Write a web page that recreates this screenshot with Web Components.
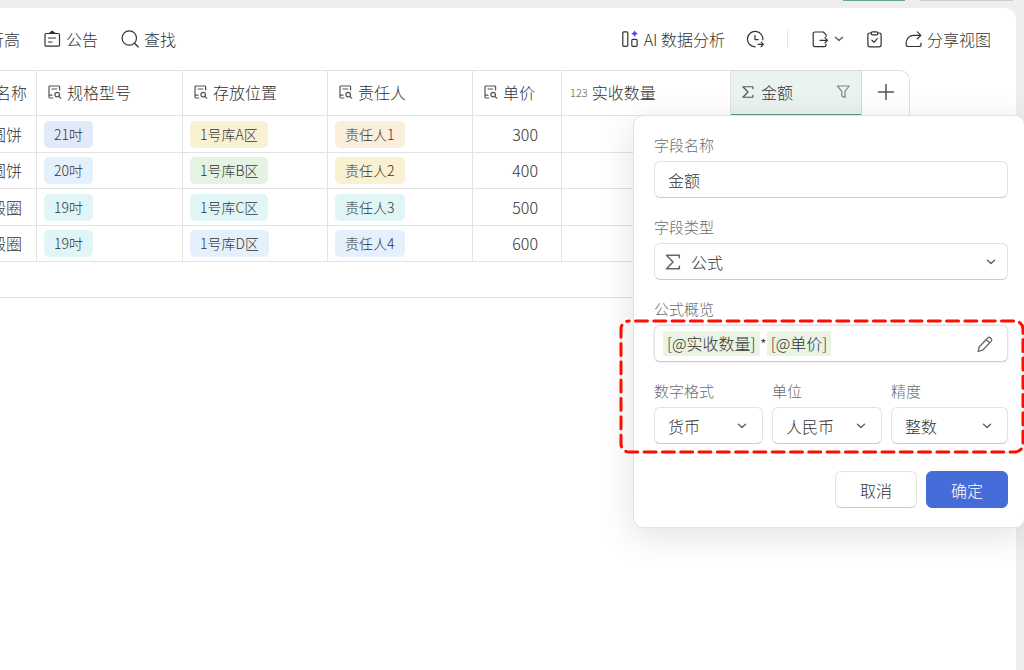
<!DOCTYPE html>
<html lang="zh-CN">
<head>
<meta charset="utf-8">
<title>库存表</title>
<style>
html, body { height: 100%; }
body {
  margin: 0; overflow: hidden; background: #eeeeee;
  font-family: "Noto Sans CJK SC", sans-serif; font-size: 16px; font-weight: 300; color: #333333;
}
</style>
</head>
<body>
<sheet-app></sheet-app>
<script>
const ICONS = {
  notice: ['0 0 18 18', '<path d="M6 3.5H3.3Q2 3.5 2 4.8V14.9Q2 16.2 3.3 16.2H15.2Q16.5 16.2 16.5 14.9V4.8Q16.5 3.5 15.2 3.5H12.5M6 3.5H12.5M6.2 3.5L9.2 1.2L12.3 3.5M5.5 8H12.5M5.5 12H9"/>'],
  search: ['0 0 18 18', '<circle cx="8.3" cy="8" r="7.2"/><path d="M13.4 13L17.2 17"/>'],
  ai: ['0 0 18 18', '<rect x="1.8" y="1.8" width="5" height="14.5" rx="1"/><rect x="10.8" y="9.3" width="5.3" height="7" rx="1"/><path fill="#6a3df0" stroke="none" d="M13.6 .4L14.9 2.5L17 3.6L14.9 4.7L13.6 7L12.3 4.7L10.2 3.6L12.3 2.5Z"/>'],
  history: ['0 0 18 18', '<path d="M9.2 16.8A7.7 7.7 0 1 1 16.8 9.8M9 5.4V9.6H12.2M12 14.3H17.4M15.2 12.1L17.4 14.3L15.2 16.5"/>'],
  export: ['0 0 18 18', '<path d="M15 6.5V4.7L12.3 2H3.9Q2.2 2 2.2 3.7V15Q2.2 16.7 3.9 16.7H13.3Q15 16.7 15 15.1V14.1M9 10.3H16.5M13.9 7.7L16.5 10.3L13.9 12.9"/>'],
  down: ['0 0 10 10', '<path stroke-width="1.5" d="M1.5 3.2L5 6.5L8.5 3.2"/>'],
  task: ['0 0 18 18', '<path d="M6.3 3H4.9Q2.9 3 2.9 5V14.8Q2.9 16.8 4.9 16.8H14.1Q16.1 16.8 16.1 14.8V5Q16.1 3 14.1 3H12.7"/><rect x="6.3" y="1.8" width="6.4" height="3" rx="1"/><path d="M6.9 10.2L9.1 12.3L12.3 8.7"/>'],
  share: ['0 0 18 18', '<path d="M2.2 11.5V14.5Q2.2 16.5 4.2 16.5H15Q17 16.5 17 14.5V13M2.6 10.6Q4.4 5.4 10.1 5.4H16.6M13.3 1.9L16.9 5.4L13.3 8.8"/>'],
  lookup: ['0 0 16 16', '<path d="M12.6 6V3.1Q12.6 2 11.5 2H3.1Q2 2 2 3.1V12.9Q2 14 3.1 14H5.8M5 5H9.8M2 11.2H5"/><circle cx="10.2" cy="10.6" r="2.3"/><path d="M11.9 12.4L13.8 14.2"/>'],
  sum: ['0 0 16 16', '<path stroke-width="1.4" d="M13.6 4.2V2H2.2L8 8L2.2 14H13.6V11.8"/>'],
  filter: ['0 0 16 16', '<path stroke-width="1.2" d="M2.4 2H14.2L10 7.4V13.4L6.8 12V7.4Z"/>'],
  plus: ['0 0 18 18', '<path stroke-width="1.5" d="M9 1.5V16.5M1.5 9H16.5"/>'],
  pencil: ['0 0 18 18', '<path stroke-width="1.5" d="M1.3 17.2L2.4 12.3L12.3 2Q13.6 .9 14.9 2L16.1 3.2Q17.2 4.5 16.1 5.8L6.3 16ZM10.4 4L14.1 7.7"/>']
};

const define = (name, html, ready) => {
  const template = document.createElement('template');
  template.innerHTML = html;
  customElements.define(name, class extends HTMLElement {
    constructor() {
      super();
      this.attachShadow({ mode: 'open' }).append(template.content.cloneNode(true));
    }
    connectedCallback() { if (ready) ready(this, this.shadowRoot); }
  });
};

define('ui-icon', `
<style>
:host { display: block; flex: none; width: var(--size, 18px); height: var(--size, 18px); }
svg { display: block; width: 100%; height: 100%; overflow: visible; fill: none; stroke: currentColor; stroke-width: 1.2; stroke-linecap: round; stroke-linejoin: round; }
</style>
<svg aria-hidden="true"></svg>`, (el, root) => {
  const [box, body] = ICONS[el.getAttribute('name')];
  const svg = root.querySelector('svg');
  svg.setAttribute('viewBox', box);
  svg.innerHTML = body;
});

define('tool-button', `
<style>
:host { display: block; flex: none; }
button { display: flex; align-items: center; gap: 5px; margin: 0; padding: 0; border: 0; background: none; font: inherit; line-height: 24px; color: inherit; white-space: nowrap; }
</style>
<button type="button"><slot></slot></button>`, (el, root) => {
  const name = el.getAttribute('label');
  if (name) root.querySelector('button').setAttribute('aria-label', name);
});

define('tool-bar', `
<style>
:host { display: flex; align-items: center; justify-content: space-between; height: 62px; padding-right: 25px; }
div { display: flex; align-items: center; }
.left { gap: 23px; margin-left: -12px; }
.right { gap: 21px; }
.down { --size: 10px; color: #666; }
hr { width: 1px; height: 18px; margin: 0 2px; border: 0; background: #e6e6e6; }
</style>
<div class="left">
  <tool-button>行高</tool-button>
  <tool-button><ui-icon name="notice"></ui-icon>公告</tool-button>
  <tool-button><ui-icon name="search"></ui-icon>查找</tool-button>
</div>
<div class="right">
  <tool-button><ui-icon name="ai"></ui-icon>AI 数据分析</tool-button>
  <tool-button label="历史记录"><ui-icon name="history"></ui-icon></tool-button>
  <hr>
  <tool-button label="导出"><ui-icon name="export"></ui-icon><ui-icon class="down" name="down"></ui-icon></tool-button>
  <tool-button label="任务"><ui-icon name="task"></ui-icon></tool-button>
  <tool-button><ui-icon name="share"></ui-icon>分享视图</tool-button>
</div>`);

define('tag-chip', `
<style>
:host { display: inline-block; vertical-align: middle; padding: 0 10px; border-radius: 5px; font-size: 14px; line-height: 27px; background: var(--tag); white-space: nowrap; }
</style>
<slot></slot>`);

define('data-grid', `
<style>
:host { display: block; overflow: hidden; --line: #e2e2e2; }
table { table-layout: fixed; width: 910px; height: 192px; border-collapse: separate; border-spacing: 0; }
th, td { box-sizing: border-box; padding: 0 7px; border: 0 solid var(--line); border-width: 0 1px 1px 0; overflow: hidden; text-align: left; font-weight: inherit; white-space: nowrap; }
th { height: 46px; border-top-width: 1px; padding: 0 10px 2px; }
th:first-child div, td:first-child div { display: flex; justify-content: flex-end; }
th:first-child { padding: 0 9px 2px 0; }
td:first-child { padding: 0 14px 0 0; }
th > div { display: flex; align-items: center; gap: 4px; line-height: 24px; }
th ui-icon { --size: 16px; color: #555; }
th.count { padding-left: 8px; }
th small { font-size: 11px; color: #555; }
td.num { text-align: right; padding-right: 23px; }
.active { background: #eaf3f0; border-color: #cfdeda; box-shadow: inset 0 -1px #5a9c87; }
.active ui-icon:first-child { --size: 14px; margin-right: 2px; }
.active ui-icon:last-child { margin-left: auto; color: #7c8a86; }
.add { border-top-right-radius: 10px; padding: 0 15px 2px; }
.add ui-icon { --size: 18px; }
.add button { display: block; padding: 0; border: 0; background: none; }
.off { border: 0; }
.new-row { height: 35px; border-bottom: 1px solid var(--line); }
</style>
<table>
  <colgroup>
    <col style="width:37px"><col style="width:146px"><col style="width:145px"><col style="width:145px">
    <col style="width:89px"><col style="width:169px"><col style="width:131px"><col style="width:48px">
  </colgroup>
  <thead><tr>
    <th><div>名称</div></th>
    <th><div><ui-icon name="lookup"></ui-icon>规格型号</div></th>
    <th><div><ui-icon name="lookup"></ui-icon>存放位置</div></th>
    <th><div><ui-icon name="lookup"></ui-icon>责任人</div></th>
    <th><div><ui-icon name="lookup"></ui-icon>单价</div></th>
    <th class="count"><div><small>123</small>实收数量</div></th>
    <th class="active"><div><ui-icon name="sum"></ui-icon>金额<ui-icon name="filter"></ui-icon></div></th>
    <th class="add"><button type="button" aria-label="添加字段"><ui-icon name="plus"></ui-icon></button></th>
  </tr></thead>
  <tbody></tbody>
</table>
<div class="new-row"></div>`, (el, root) => {
  const blue = '#e4f0fb', teal = '#e0f5f6', yellow = '#f9f1d2';
  const rows = [
    ['圆饼', '21吋', '#e2e9f8', '1号库A区', yellow, '责任人1', '#fbeedb', 300],
    ['圆饼', '20吋', blue, '1号库B区', '#e5f3e2', '责任人2', yellow, 400],
    ['毂圈', '19吋', teal, '1号库C区', teal, '责任人3', teal, 500],
    ['毂圈', '19吋', teal, '1号库D区', blue, '责任人4', blue, 600]
  ];
  const chip = (text, tone) => `<td><tag-chip style="--tag:${tone}">${text}</tag-chip></td>`;
  root.querySelector('tbody').innerHTML = rows.map(r =>
    `<tr><td><div>${r[0]}</div></td>${chip(r[1], r[2])}${chip(r[3], r[4])}${chip(r[5], r[6])}<td class="num">${r[7]}</td><td></td><td></td><td class="off"></td></tr>`
  ).join('');
});

const FIELD = `
:host { display: block; min-width: 0; }
label, .label { display: block; margin-bottom: 5px; font-size: 15px; line-height: 22px; color: #6c6c6c; }
.box { position: relative; display: flex; align-items: center; }
input, select, .formula { box-sizing: border-box; width: 100%; height: 37px; margin: 0; padding: 0 13px; border: 1px solid #e2e2e2; border-bottom-color: #cccccc; border-radius: 6px; background: #fff; font: inherit; color: inherit; outline: 0; appearance: none; }
`;

define('text-field', `<style>${FIELD}</style>
<label for="control"></label><div class="box"><input id="control" type="text"></div>`, (el, root) => {
  root.querySelector('label').textContent = el.getAttribute('label');
  root.querySelector('input').value = el.getAttribute('value');
});

define('select-field', `<style>${FIELD}
.box > ui-icon { position: absolute; pointer-events: none; color: #666; }
.down { --size: 10px; right: var(--arrow, 16px); }
.lead { --size: 18px; left: 10px; }
:host([icon]) select { padding-left: 36px; }
</style>
<label for="control"></label><div class="box"><select id="control"></select><ui-icon class="down" name="down"></ui-icon></div>`, (el, root) => {
  root.querySelector('label').textContent = el.getAttribute('label');
  root.querySelector('select').add(new Option(el.getAttribute('value')));
  if (el.hasAttribute('icon')) {
    const icon = document.createElement('ui-icon');
    icon.className = 'lead';
    icon.setAttribute('name', el.getAttribute('icon'));
    root.querySelector('.box').append(icon);
  }
});

define('formula-field', `<style>${FIELD}
.formula { display: flex; align-items: center; padding: 0 14px 0 8px; box-shadow: 0 0 2px #0000002e; }
.formula ::slotted(mark) { padding: 0 4px; background: #eaf4e3; color: inherit; line-height: 25px; }
button { margin: 0 0 0 auto; padding: 0; border: 0; background: none; color: #666; }
button ui-icon { --size: 16px; }
</style>
<div class="label" id="name">公式概览</div>
<div class="formula" role="group" aria-labelledby="name"><slot></slot><button type="button" aria-label="编辑公式"><ui-icon name="pencil"></ui-icon></button></div>`);

define('push-button', `
<style>
:host { display: block; width: 82px; }
button { box-sizing: border-box; width: 100%; height: 37px; padding: 0; border: 1px solid #e2e2e2; border-bottom-color: #cccccc; border-radius: 6px; background: #fff; font: inherit; color: inherit; }
:host([primary]) button { border-color: #466cd9; background: #466cd9; color: #fff; }
</style>
<button type="button"><slot></slot></button>`);

define('field-panel', `
<style>
:host { display: block; box-sizing: border-box; width: 392px; padding: 18px 16px 19px 20px; border: 1px solid #e2e2e2; border-radius: 10px; background: #fff; box-shadow: 0 8px 36px #0000001f; }
form { display: grid; gap: 18px; }
.formats { display: grid; grid-template-columns: 109px 110px 1fr; gap: 9px; }
.actions { display: flex; justify-content: flex-end; gap: 9px; margin-top: 9px; }
.frame { position: absolute; left: -16px; top: 202px; width: 408px; height: 136px; overflow: visible; fill: none; stroke: #fa0f00; stroke-width: 3; stroke-linecap: round; pointer-events: none; }
</style>
<form>
  <text-field label="字段名称" value="金额"></text-field>
  <select-field label="字段类型" value="公式" icon="sum" style="--arrow:12px"></select-field>
  <formula-field><mark>[@实收数量]</mark><span>*</span><mark>[@单价]</mark></formula-field>
  <div class="formats">
    <select-field label="数字格式" value="货币"></select-field>
    <select-field label="单位" value="人民币"></select-field>
    <select-field label="精度" value="整数"></select-field>
  </div>
  <div class="actions"><push-button>取消</push-button><push-button primary>确定</push-button></div>
</form>
<svg class="frame" aria-hidden="true"><rect x="3" y="3" width="402" height="131" rx="8" stroke-dasharray="12 6.3" stroke-dashoffset="-6.5"/></svg>`);

define('sheet-app', `
<style>
:host { display: flex; flex-direction: column; position: relative; height: 100vh; overflow: hidden; }
.tabs { display: flex; justify-content: flex-end; gap: 15px; height: 8px; padding-right: 11px; }
.tabs i { width: 93px; height: 1px; background: #cccccc; }
.tabs i:first-child { width: 62px; background: #6aa893; }
main { flex: 1; margin-right: 8px; border-top-right-radius: 12px; background: #fff; }
field-panel { position: absolute; top: 115px; right: -1px; }
</style>
<div class="tabs"><i></i><i></i></div>
<main><tool-bar></tool-bar><data-grid></data-grid></main>
<field-panel></field-panel>`);
</script>
</body>
</html>
